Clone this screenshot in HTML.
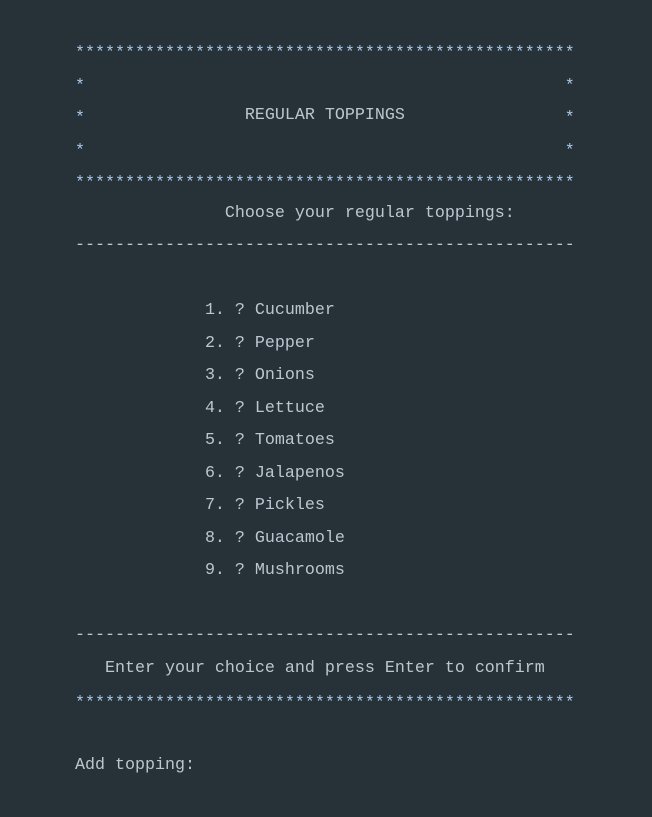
<!DOCTYPE html>
<html><head><style>
html,body{margin:0;padding:0;background:#263238;width:652px;height:817px;overflow:hidden}
pre{position:absolute;left:75px;top:35px;margin:0;font-family:"Liberation Mono",monospace;font-size:16.67px;line-height:32.5px;color:#bcc6cf}
.a{color:#a9c7e6;position:relative;top:3px}
</style></head><body>
<pre><span class="a">**************************************************
*                                                *
*</span>                REGULAR TOPPINGS                <span class="a">*
*                                                *
**************************************************</span>
               Choose your regular toppings:
--------------------------------------------------

             1. ? Cucumber
             2. ? Pepper
             3. ? Onions
             4. ? Lettuce
             5. ? Tomatoes
             6. ? Jalapenos
             7. ? Pickles
             8. ? Guacamole
             9. ? Mushrooms

--------------------------------------------------
   Enter your choice and press Enter to confirm
<span class="a">**************************************************</span>

Add topping:</pre>
</body></html>
